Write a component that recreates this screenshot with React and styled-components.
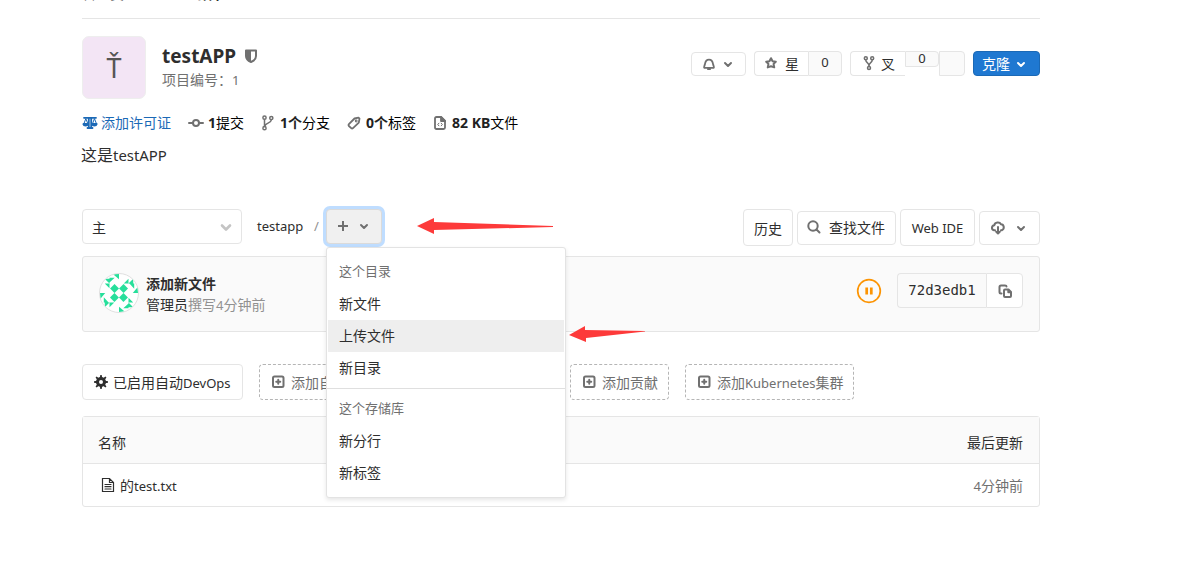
import React from "react";
import styled, { createGlobalStyle, css } from "styled-components";

const GlobalStyle = createGlobalStyle`
  *, *::before, *::after {
    box-sizing: border-box;
  }

  body {
    margin: 0;
    background: #fff;
    color: #2e2e2e;
    font-family: "Noto Sans CJK SC", "Noto Sans", sans-serif;
    font-size: 14px;
    line-height: 20px;
    overflow: hidden;
  }
`;

// latin glyphs run a little smaller than the CJK ones next to them
const Latin = styled.span`
  font-family: "Noto Sans", sans-serif;
  font-size: 0.93em;
  line-height: 1;
`;

const Page = styled.main`
  width: 958px;
  height: 577px;
  margin-left: 82px;
`;

const Icon = styled.svg`
  flex: none;
  display: block;
  width: ${(p) => p.$size || 16}px;
  height: ${(p) => p.$size || 16}px;
  fill: none;
  stroke: currentColor;
  stroke-width: ${(p) => p.$weight || 2};
  stroke-linecap: round;
  stroke-linejoin: round;
  color: ${(p) => p.$color || "#707070"};
`;

const Breadcrumbs = styled.nav`
  display: flex;
  align-items: flex-end;
  gap: 74px;
  height: 19px;
  padding-bottom: 15px;
  border-bottom: 1px solid #e5e5e5;
  color: #707070;
  overflow: hidden;

  strong {
    color: #2e2e2e;
  }
`;

const Header = styled.header`
  display: flex;
  align-items: flex-start;
  height: 80px;
  padding-top: 17px;
`;

const ProjectAvatar = styled.div`
  width: 64px;
  height: 63px;
  border: 1px solid #eee;
  border-radius: 7px;
  background: #f3e5f5;
  color: #555;
  font: 27px/61px "Noto Sans", sans-serif;
  text-align: center;
`;

const ProjectTitle = styled.div`
  flex: 1;
  padding: 7px 0 0 16px;
  color: #707070;

  h1 {
    display: flex;
    align-items: center;
    gap: 7px;
    height: 26px;
    margin: 0;
    color: #2e2e2e;
    font: bold 19px/26px "Noto Sans", sans-serif;
  }
`;

const HeaderActions = styled.div`
  display: flex;
  gap: 8px;
  padding-top: 15px;
`;

const buttonBase = css`
  display: flex;
  align-items: center;
  justify-content: center;
  border: 1px solid #e5e5e5;
  border-radius: 4px;
  background: #fff;
  color: #2e2e2e;
`;

const SmallButton = styled.div`
  ${buttonBase}
  width: ${(p) => p.$width}px;
  height: 25px;
  gap: ${(p) => p.$gap || 7}px;
  padding-bottom: 2px;
`;

const NotifyButton = styled(SmallButton)`
  height: 24px;
  margin-top: 1px;
  padding: 0 1px 0 0;
  gap: 3px;
`;

const CloneButton = styled(SmallButton)`
  gap: 3px;
  padding: 0 2px 2px 0;
  border-color: #1b69b6;
  background: #1f78d1;
  color: #fff;

  svg {
    margin-top: 2px;
  }
`;

const Group = styled.div`
  display: flex;
  align-items: flex-start;

  & > :first-child {
    border-radius: 4px 0 0 4px;
    border-right: 0;
  }
`;

const Count = styled.div`
  ${buttonBase}
  width: ${(p) => p.$width}px;
  height: ${(p) => p.$height || 25}px;
  padding-bottom: 1px;
  border-radius: 0 4px 4px 0;
  background: #fafafa;
`;

const Stats = styled.div`
  display: flex;
  align-items: center;
  height: 20px;
  margin-top: 14px;
  color: #000;
`;

const Stat = styled.div`
  display: flex;
  align-items: center;
  gap: ${(p) => p.$gap || 4}px;
  width: ${(p) => p.$width}px;
  color: ${(p) => p.$color};
  white-space: nowrap;

  span {
    padding-bottom: 2px;
  }

  b {
    color: #222;
    font-size: 14px;
  }
`;

const Description = styled.p`
  height: 24px;
  margin: 9px 0 0 -1px;
  font-size: 16px;
  line-height: 24px;
`;

const TreeControls = styled.div`
  display: flex;
  height: 37px;
  margin-top: 43px;
`;

const RefSelect = styled.div`
  ${buttonBase}
  justify-content: space-between;
  width: 160px;
  height: 35px;
  padding: 0 7px 0 9px;
`;

const PathName = styled.div`
  width: 57px;
  margin-left: 15px;
  line-height: 32px;
`;

const Slash = styled.div`
  width: 12px;
  color: #919191;
  line-height: 33px;
`;

const AddWrap = styled.div`
  position: relative;
`;

const AddButton = styled.div`
  ${buttonBase}
  gap: 5px;
  width: 56px;
  height: 35px;
  padding: 0 1px 1px 0;
  border-color: #dadada;
  background: #f0f0f0;
  box-shadow: 0 0 0 3px #bfddff;
`;

const Menu = styled.div`
  position: absolute;
  z-index: 2;
  top: 38px;
  left: 0;
  width: 240px;
  height: 251px;
  padding: 8px 1px;
  border: 1px solid #e3e3e3;
  border-radius: 3px;
  background: #fff;
  box-shadow: 0 2px 4px rgba(0, 0, 0, 0.1);
`;

const MenuHeader = styled.div`
  padding: 0 11px 2px;
  color: #707070;
  font-size: 13px;
  line-height: 30px;
`;

const MenuItem = styled.div`
  padding: 0 11px 2px;
  background: ${(p) => (p.$active ? "#eee" : "transparent")};
  line-height: 30px;
`;

const Divider = styled.div`
  height: 1px;
  margin: 4px -1px;
  background: #dfdfdf;
`;

const TreeActions = styled.div`
  display: flex;
  align-items: center;
  gap: 4px;
  margin-left: auto;
`;

const Button = styled.div`
  ${buttonBase}
  gap: ${(p) => p.$gap || 7}px;
  width: ${(p) => p.$width}px;
  height: ${(p) => p.$height || 37}px;
  padding: ${(p) => p.$pad || 0};
`;

const Commit = styled.section`
  display: flex;
  height: 76px;
  margin-top: 10px;
  padding: 16px;
  border: 1px solid #e5e5e5;
  border-radius: 3px;
  background: #fafafa;
`;

const UserAvatar = styled.svg`
  width: 40px;
  height: 40px;
  border: 1px solid #e0e0e0;
  border-radius: 50%;
  background: #fff;
`;

const CommitText = styled.div`
  flex: 1;
  padding-left: 7px;
  line-height: 21px;

  b,
  div {
    display: block;
  }

  span {
    color: #919191;
  }
`;

const PipelineIcon = styled.svg`
  width: 26px;
  height: 26px;
  margin: 5px 15px 0 0;
`;

const Sha = styled.div`
  ${buttonBase}
  width: 89px;
  height: 35px;
  padding-bottom: 2px;
  background: #fafafa;
  font-family: "DejaVu Sans Mono", monospace;
`;

const CopyButton = styled.div`
  ${buttonBase}
  width: 37px;
  height: 35px;
  border-radius: 0 4px 4px 0;
`;

const Shortcuts = styled.div`
  display: flex;
  gap: 16px;
  margin-top: 32px;
`;

const Shortcut = styled.div`
  ${buttonBase}
  justify-content: flex-start;
  gap: ${(p) => (p.$dashed ? 5 : 4)}px;
  width: ${(p) => p.$width}px;
  height: 36px;
  padding-left: 10px;
  white-space: nowrap;

  ${(p) =>
    p.$dashed &&
    css`
      border: 1px dashed #b5b5b5;
      color: #707070;
    `}
`;

const Files = styled.section`
  height: 91px;
  margin-top: 16px;
  border: 1px solid #e5e5e5;
  border-radius: 3px;
`;

const FileHead = styled.div`
  display: flex;
  justify-content: space-between;
  height: 47px;
  padding: 5px 16px 0 15px;
  border-bottom: 1px solid #e5e5e5;
  background: #fafafa;
  line-height: 40px;
`;

const FileRow = styled.div`
  display: flex;
  align-items: center;
  gap: 4px;
  height: 42px;
  padding: 0 16px 1px 17px;

  time {
    margin-left: auto;
    color: #707070;
  }
`;

const Arrow = styled.svg`
  position: absolute;
  z-index: 3;
  top: ${(p) => p.$top}px;
  left: ${(p) => p.$left}px;
  width: 140px;
  height: 18px;
  fill: #fd3a3a;
`;

const Chevron = ({ color }) => (
  <Icon viewBox="0 0 16 16" $color={color}>
    <path d="M5 7l3 3 3-3" />
  </Icon>
);

const BranchIcon = () => (
  <Icon viewBox="0 0 16 16" $weight={1.5}>
    <circle cx="4.500" cy="2.700" r="1.600" />
    <circle cx="4.500" cy="13.200" r="1.600" />
    <circle cx="11.300" cy="3" r="1.600" />
    <path d="M4.500 4.500v7M11.300 5C11 8.500 5.500 7.800 4.800 11" />
  </Icon>
);

const ForkIcon = () => (
  <Icon viewBox="0 0 16 16" $weight={1.5}>
    <circle cx="4.800" cy="3.200" r="1.500" />
    <circle cx="11.200" cy="3.200" r="1.500" />
    <circle cx="8" cy="13" r="1.500" />
    <path d="M4.800 5c0 3 3.200 2.200 3.200 6M11.200 5c0 3-3.200 2.200-3.200 6" />
  </Icon>
);

const PlusSquare = () => (
  <Icon viewBox="0 0 16 16">
    <rect x="3" y="2.500" width="10.500" height="10.500" rx="1.500" />
    <path d="M8.250 5.800v4M6.250 7.800h4" />
  </Icon>
);

const GearIcon = () => (
  <Icon viewBox="0 0 16 16" $color="#2e2e2e" $weight={3}>
    <circle cx="8" cy="8" r="3.500" />
    {[0, 45, 90, 135, 180, 225, 270, 315].map((angle) => (
      <path
        key={angle}
        d="M6.800 4l.5-3h1.400l.5 3z"
        transform={`rotate(${angle} 8 8)`}
        fill="currentColor"
        stroke="none"
      />
    ))}
  </Icon>
);

const Identicon = () => (
  <UserAvatar viewBox="0 0 40 40" fill="#27df9b">
    {[0, 90, 180, 270].map((angle) => (
      <g key={angle} transform={`rotate(${angle} 20 20)`}>
        <path d="M15.300 10.500l4.700 4.700-4.700 4.700-4.700-4.700z" />
        <path d="M13.500 0H20v5.500z" />
        <path d="M25 10l5-5v5zM30 10l5-5v5zM31 10h5v5.500z" />
      </g>
    ))}
  </UserAvatar>
);

const addShortcuts = [
  { width: 127, label: "添加自述文件" },
  { width: 152, label: "添加", latin: "CHANGELOG" },
  { width: 99, label: "添加贡献" },
  { width: 169, label: "添加", latin: "Kubernetes", tail: "集群" },
];

const App = () => (
  <>
    <GlobalStyle />
    <Page>
      <Breadcrumbs>
        <span>管理员</span>
        <strong>细节</strong>
      </Breadcrumbs>

      <Header>
        <ProjectAvatar>Ť</ProjectAvatar>
        <ProjectTitle>
          <h1>
            testAPP
            <Icon viewBox="0 0 16 16">
              <path d="M3 2.500h10v5.500c0 3-2.500 5-5 6-2.500-1-5-3-5-6z" />
              <path d="M3 2.500h5v11.500c-2.500-1-5-3-5-6z" fill="currentColor" stroke="none" />
            </Icon>
          </h1>
          项目编号：<Latin>1</Latin>
        </ProjectTitle>
        <HeaderActions>
          <NotifyButton $width={55}>
            <Icon viewBox="0 0 16 16" $weight={1.8}>
              <path d="M3.200 11.800c-.6-.8.400-2 .7-3.500C4.400 5 5.500 3.700 8 3.700S11.600 5 12.100 8.300c.3 1.500 1.300 2.700.7 3.500zM7 13.200h2" />
            </Icon>
            <Chevron />
          </NotifyButton>
          <Group>
            <SmallButton $width={54}>
              <Icon viewBox="0 0 16 16" $size={14} $weight={2.3}>
                <path d="M8 2.500l1.800 3.500 3.700.500-2.600 2.500.8 4L8 11.800 4.300 13l.8-4L2.500 6.500 6.200 6z" />
              </Icon>
              星
            </SmallButton>
            <Count $width={34}><Latin>0</Latin></Count>
          </Group>
          <Group>
            <SmallButton $width={55} $gap={4}>
              <ForkIcon />
              叉
            </SmallButton>
            <Count $width={34} $height={16}><Latin>0</Latin></Count>
            <Count $width={26} />
          </Group>
          <CloneButton $width={67}>
            克隆
            <Chevron color="#fff" />
          </CloneButton>
        </HeaderActions>
      </Header>

      <Stats>
        <Stat $width={106} $gap={3} $color="#1b69b6">
          <Icon viewBox="0 0 16 16" $color="#1b69b6" $weight={1.8}>
            <path d="M2 2.800h12M6.800 3v9M9.200 3v9M5.500 13h5" />
            <path d="M3.700 4L1.800 9h3.800zM12.300 4l-1.900 5h3.800z" strokeWidth="1" />
            <path d="M1.300 9h4.600c-.5 2-4.100 2-4.600 0zM10.100 9h4.600c-.5 2-4.100 2-4.600 0z" fill="currentColor" />
          </Icon>
          <span>添加许可证</span>
        </Stat>
        <Stat $width={72}>
          <Icon viewBox="0 0 16 16">
            <circle cx="8" cy="8" r="3" />
            <path d="M1 8h4M11 8h4" />
          </Icon>
          <span><Latin as="b">1</Latin>提交</span>
        </Stat>
        <Stat $width={86}>
          <BranchIcon />
          <span><Latin as="b">1</Latin><b>个</b>分支</span>
        </Stat>
        <Stat $width={86}>
          <Icon viewBox="0 0 16 16" $weight={1.8}>
            <path d="M8.500 3.500L12.500 2.700l1 1-.7 4L7 13.100c-.6.500-1.200.5-1.800 0L2.900 11c-.6-.6-.6-1.300 0-1.900z" />
            <circle cx="10.200" cy="6" r=".5" />
          </Icon>
          <span><Latin as="b">0</Latin><b>个</b>标签</span>
        </Stat>
        <Stat $width={90}>
          <Icon viewBox="0 0 16 16" $weight={1.8}>
            <path d="M3 3.500c0-1 .5-1.500 1.500-1.500H9l4 4v6.500c0 1-.5 1.500-1.500 1.500h-7c-1 0-1.500-.5-1.500-1.500z" />
            <path d="M9 2v4h4z" fill="currentColor" />
            <path d="M6.900 8.200L5.800 9.500l1.100 1.300M9.200 8.200l1.100 1.300-1.100 1.300" style={{ strokeWidth: 1 }} />
          </Icon>
          <span><Latin as="b">82 KB</Latin>文件</span>
        </Stat>
      </Stats>

      <Description>这是<Latin>testAPP</Latin></Description>

      <TreeControls>
        <RefSelect>
          主
          <Icon viewBox="0 0 16 16" $color="#c4c4c4" $weight={2.6}>
            <path d="M4 6.500l4 4 4-4" />
          </Icon>
        </RefSelect>
        <PathName><Latin>testapp</Latin></PathName>
        <Slash><Latin>/</Latin></Slash>
        <AddWrap>
          <AddButton>
            <Icon viewBox="0 0 16 16" style={{ strokeLinecap: "butt" }}>
              <path d="M8 3v10M3 8h10" />
            </Icon>
            <Chevron />
          </AddButton>
          <Menu>
            <MenuHeader>这个目录</MenuHeader>
            <MenuItem>新文件</MenuItem>
            <MenuItem $active>上传文件</MenuItem>
            <MenuItem>新目录</MenuItem>
            <Divider />
            <MenuHeader>这个存储库</MenuHeader>
            <MenuItem>新分行</MenuItem>
            <MenuItem>新标签</MenuItem>
          </Menu>
          <Arrow $top={8} $left={91} viewBox="0 0 140 18">
            <path d="M0 9L17 1v4l119 4v1L17 13v4z" />
          </Arrow>
          <Arrow $top={116} $left={243} viewBox="0 0 140 18">
            <path d="M0 10L16 1v4l60 1v.6L17 13v4z" />
          </Arrow>
        </AddWrap>
        <TreeActions>
          <Button $width={50}>历史</Button>
          <Button $width={99} $height={34} $pad="0 2px 1px 0">
            <Icon viewBox="0 0 16 16">
              <circle cx="7" cy="7" r="4.700" />
              <path d="M10.500 10.500l3 3" />
            </Icon>
            查找文件
          </Button>
          <Button $width={75} $pad="2px 0 0"><Latin>Web IDE</Latin></Button>
          <Button $width={61} $height={34} $gap={7} $pad="0 1px 0 0">
            <Icon viewBox="0 0 16 16">
              <path d="M5 10.200H4C1 9.500 1.500 5.500 4.300 5.200 5 2 9.500 1.500 11 4.200c3 0 4 4.800.8 6H11M8 7v6M6.200 11.800L8 13.500l1.800-1.700" />
            </Icon>
            <Chevron />
          </Button>
        </TreeActions>
      </TreeControls>

      <Commit>
        <Identicon />
        <CommitText>
          <b>添加新文件</b>
          <div>管理员<span>撰写<Latin>4</Latin>分钟前</span></div>
        </CommitText>
        <PipelineIcon viewBox="0 0 26 26" fill="none" stroke="#fc9403">
          <circle cx="13" cy="13" r="11.300" strokeWidth="1.700" />
          <path d="M10.700 9.500v7M15.300 9.500v7" strokeWidth="2.700" />
        </PipelineIcon>
        <Group>
          <Sha>72d3edb1</Sha>
          <CopyButton>
            <Icon viewBox="0 0 16 16">
              <path d="M4.500 10.500H4c-1 0-1.500-.5-1.500-1.500V4c0-1 .5-1.500 1.500-1.500h4c1 0 1.500.5 1.500 1" />
              <path d="M7 7.500c0-.7.300-1 1-1h3.500l2.500 2.500v4c0 .7-.3 1-1 1H8c-.7 0-1-.3-1-1zM11.300 7v2.300h2.500" />
            </Icon>
          </CopyButton>
        </Group>
      </Commit>

      <Shortcuts>
        <Shortcut $width={161}>
          <GearIcon />
          <span>已启用自动<Latin>DevOps</Latin></span>
        </Shortcut>
        {addShortcuts.map(({ width, label, latin, tail }) => (
          <Shortcut key={width} $width={width} $dashed>
            <PlusSquare />
            <span>{label}{latin && <Latin>{latin}</Latin>}{tail}</span>
          </Shortcut>
        ))}
      </Shortcuts>

      <Files>
        <FileHead>
          <span>名称</span>
          <span>最后更新</span>
        </FileHead>
        <FileRow>
          <Icon viewBox="0 0 16 16" $color="#2e2e2e" $weight={1.2} style={{ strokeLinejoin: "miter" }}>
            <path d="M2.500 1.500h7l4 4v9h-11zM9.500 1.500v4h4M5 7.500h6M5 9.700h6M5 12h6" />
          </Icon>
          <span>的<Latin>test.txt</Latin></span>
          <time><Latin>4</Latin>分钟前</time>
        </FileRow>
      </Files>
    </Page>
  </>
);

export default App;
